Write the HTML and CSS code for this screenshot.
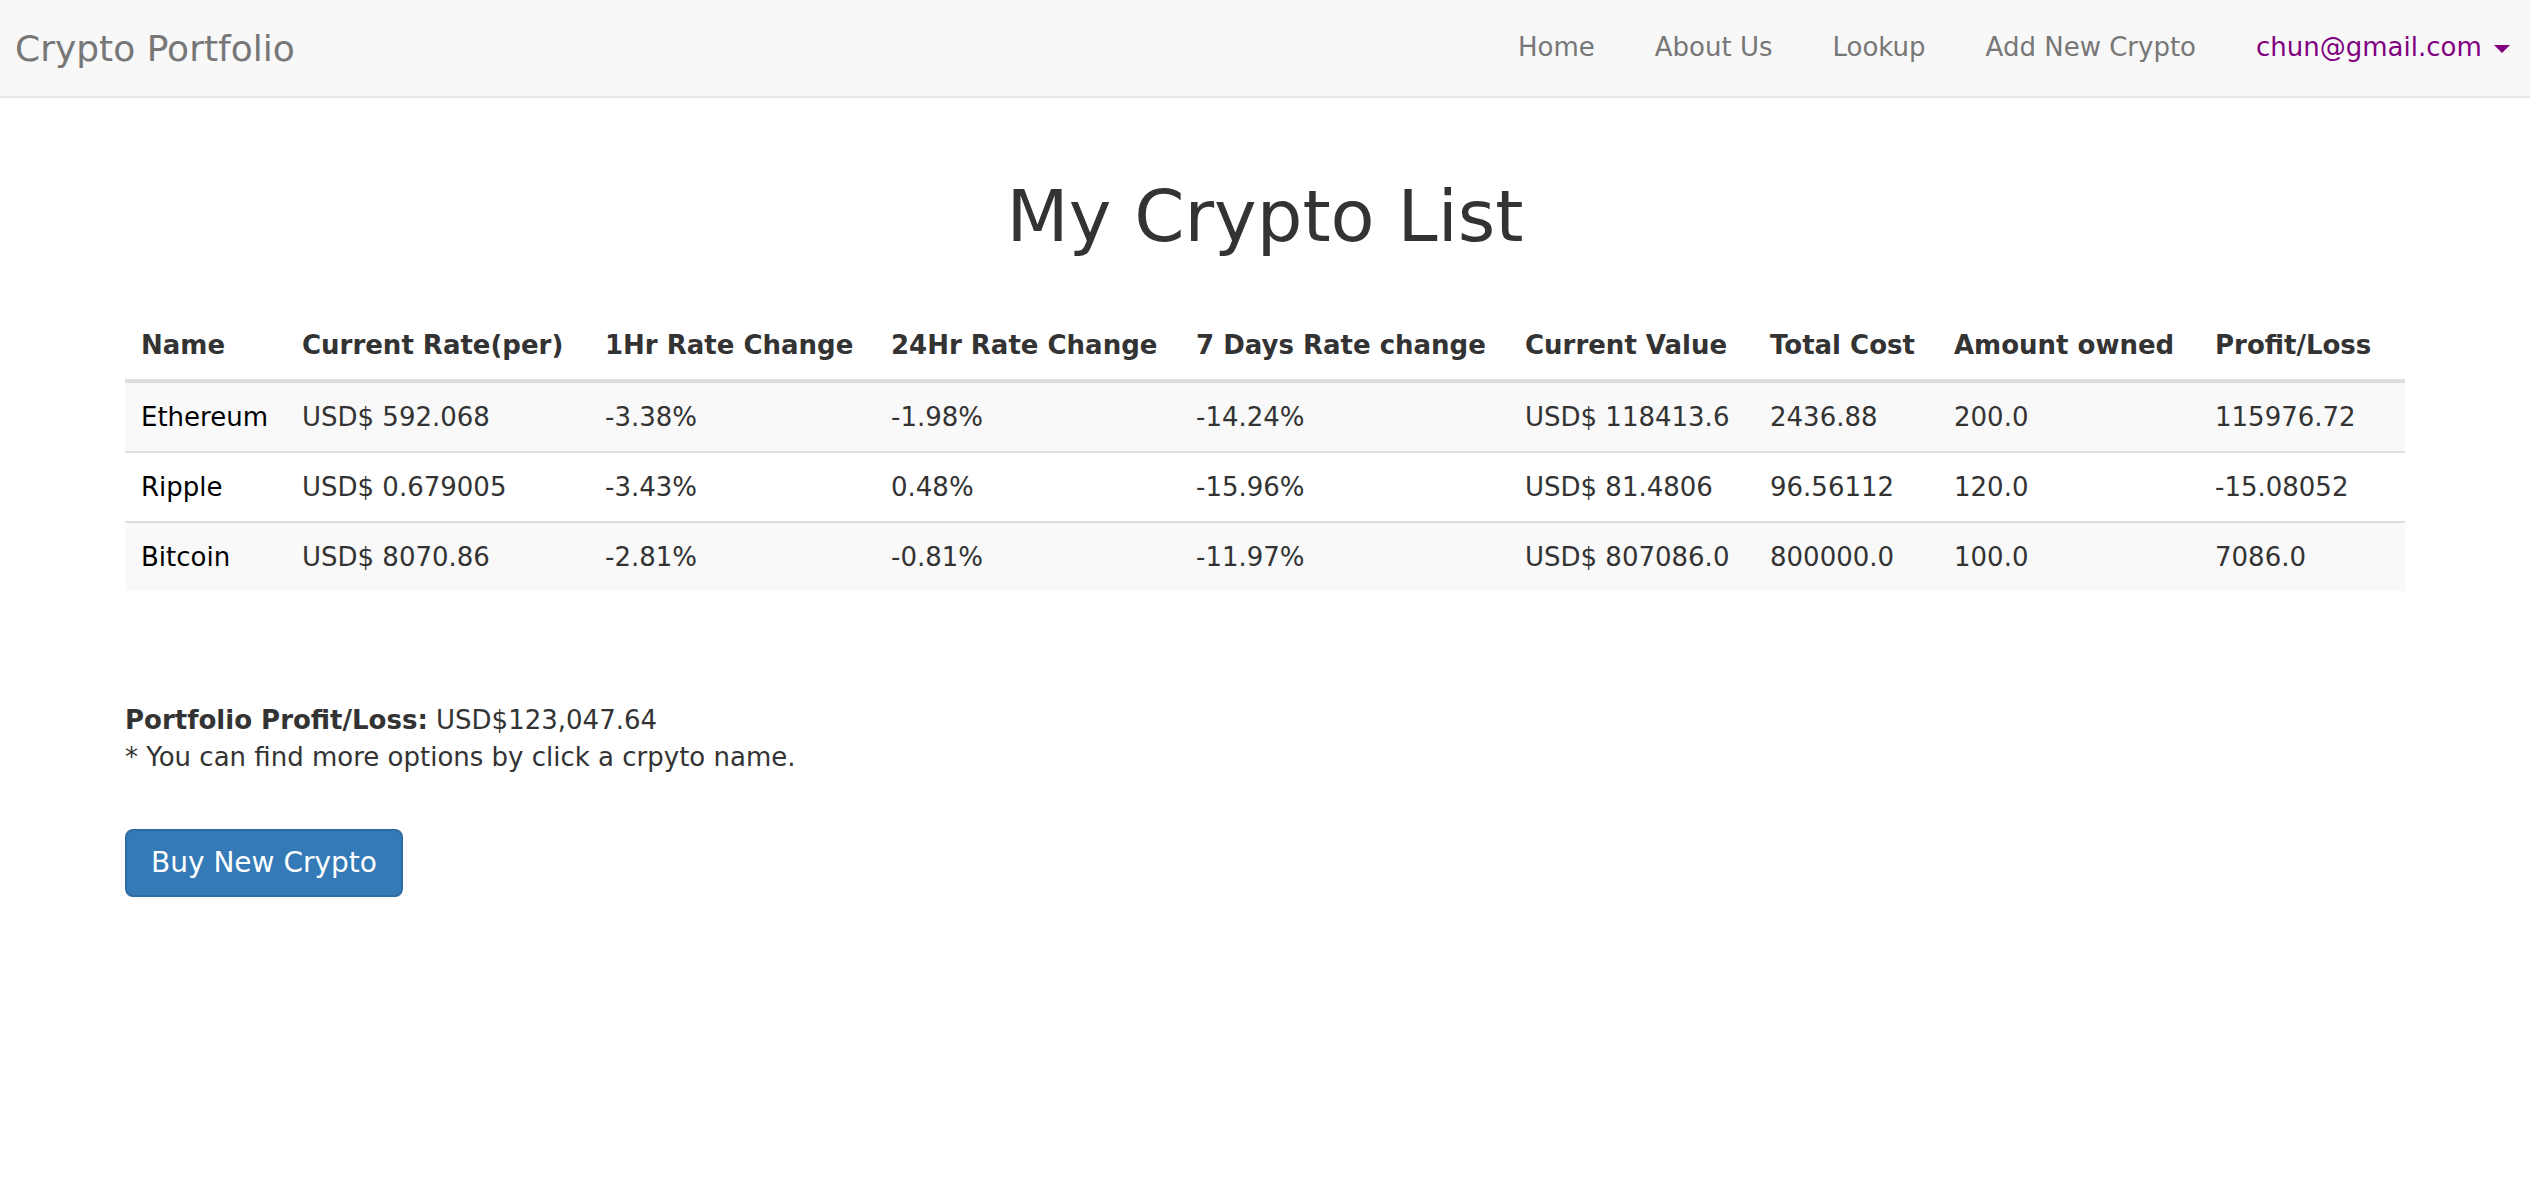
FILE: index.html
```html
<!DOCTYPE html>
<html lang="en">
<head>
<meta charset="utf-8">
<title>Crypto Portfolio</title>
<link rel="stylesheet" href="styles.css">
</head>
<body>
<nav class="navbar">
  <a class="brand" href="#">Crypto Portfolio</a>
  <ul class="nav">
    <li><a href="#">Home</a></li>
    <li><a href="#">About Us</a></li>
    <li><a href="#">Lookup</a></li>
    <li><a href="#">Add New Crypto</a></li>
    <li class="user"><a href="#">chun@gmail.com <span class="caret"></span></a></li>
  </ul>
</nav>

<main class="container">
  <h1 class="title">My Crypto List</h1>

  <table class="table">
    <colgroup>
      <col class="c1"><col class="c2"><col class="c3"><col class="c4"><col class="c5"><col class="c6"><col class="c7"><col class="c8"><col class="c9">
    </colgroup>
    <thead>
      <tr>
        <th>Name</th>
        <th>Current Rate(per)</th>
        <th>1Hr Rate Change</th>
        <th>24Hr Rate Change</th>
        <th>7 Days Rate change</th>
        <th>Current Value</th>
        <th>Total Cost</th>
        <th>Amount owned</th>
        <th>Profit/Loss</th>
      </tr>
    </thead>
    <tbody>
      <tr>
        <td><a class="coin" href="#">Ethereum</a></td>
        <td>USD$ 592.068</td>
        <td>-3.38%</td>
        <td>-1.98%</td>
        <td>-14.24%</td>
        <td>USD$ 118413.6</td>
        <td>2436.88</td>
        <td>200.0</td>
        <td>115976.72</td>
      </tr>
      <tr>
        <td><a class="coin" href="#">Ripple</a></td>
        <td>USD$ 0.679005</td>
        <td>-3.43%</td>
        <td>0.48%</td>
        <td>-15.96%</td>
        <td>USD$ 81.4806</td>
        <td>96.56112</td>
        <td>120.0</td>
        <td>-15.08052</td>
      </tr>
      <tr>
        <td><a class="coin" href="#">Bitcoin</a></td>
        <td>USD$ 8070.86</td>
        <td>-2.81%</td>
        <td>-0.81%</td>
        <td>-11.97%</td>
        <td>USD$ 807086.0</td>
        <td>800000.0</td>
        <td>100.0</td>
        <td>7086.0</td>
      </tr>
    </tbody>
  </table>

  <div class="summary">
    <strong>Portfolio Profit/Loss:</strong> USD$123,047.64<br>
    * You can find more options by click a crpyto name.
  </div>

  <a class="btn" href="#">Buy New Crypto</a>
</main>
</body>
</html>
```

FILE: styles.css
```css
* {
  box-sizing: border-box;
}

html, body {
  margin: 0;
  padding: 0;
  background: #fff;
}

body {
  font-family: "DejaVu Sans", Verdana, sans-serif;
  font-size: 26px;
  line-height: 1.42857;
  color: #333;
}

a {
  text-decoration: none;
}

/* Navbar */
.navbar {
  display: flex;
  justify-content: space-between;
  align-items: flex-start;
  height: 98px;
  background: #f8f8f8;
  border-bottom: 2px solid #e7e7e7;
}

.brand {
  padding: 29px 0 0 15px;
  font-size: 36px;
  line-height: 40px;
  color: #777;
}

.nav {
  display: flex;
  list-style: none;
  margin: 0;
  padding: 0;
}

.nav a {
  display: block;
  padding: 27px 30px 29px;
  line-height: 40px;
  color: #777;
}

.nav .user a {
  color: #800080;
  padding-right: 20px;
}

.caret {
  display: inline-block;
  width: 0;
  height: 0;
  margin-left: 4px;
  vertical-align: middle;
  border-top: 8px solid #800080;
  border-left: 8px solid transparent;
  border-right: 8px solid transparent;
}

/* Content */
.container {
  width: 2280px;
  margin: 0 auto;
}

.title {
  margin: 79px 0 55px;
  font-size: 72px;
  line-height: 1.1;
  font-weight: 400;
  text-align: center;
  color: #333;
}

.table {
  width: 100%;
  border-collapse: collapse;
  table-layout: fixed;
}

.c1 { width: 161px; }
.c2 { width: 303px; }
.c3 { width: 286px; }
.c4 { width: 305px; }
.c5 { width: 329px; }
.c6 { width: 245px; }
.c7 { width: 184px; }
.c8 { width: 261px; }
.c9 { width: 206px; }

.table th,
.table td {
  padding: 16px;
  line-height: 36px;
  text-align: left;
  white-space: nowrap;
}

.table th {
  font-weight: 700;
  vertical-align: bottom;
  border-bottom: 4px solid #ddd;
}

.table td {
  vertical-align: top;
  border-top: 2px solid #ddd;
}

.table tbody tr:first-child td {
  border-top: 0;
}

.table tbody tr:nth-child(odd) {
  background: #f9f9f9;
}

.coin {
  color: #000;
}

.summary {
  margin-top: 111px;
}

.btn {
  display: inline-block;
  margin-top: 53px;
  padding: 12px 24px;
  font-size: 28px;
  line-height: 40px;
  color: #fff;
  background: #337ab7;
  border: 2px solid #2e6da4;
  border-radius: 8px;
}
```
